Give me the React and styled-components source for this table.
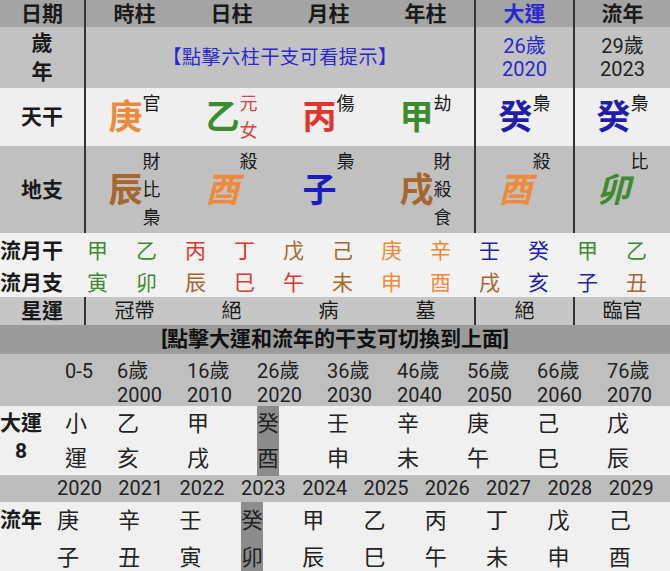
import React from 'react';
import styled, { createGlobalStyle } from 'styled-components';

const GlobalStyle = createGlobalStyle`
  html, body {
    margin: 0;
    padding: 0;
    background: #f0f0f0;
  }
  body {
    font-family: Roboto, "Noto Sans CJK TC", sans-serif;
    color: #222;
  }
`;

const WUXING = {
  wood: '#3d8b2f',
  fire: '#e0342d',
  earth: '#a6662c',
  metal: '#f08a3a',
  water: '#1e1ea8',
};

const BLUE = '#2828d2';
const LINE = '2px solid #333';

const Page = styled.div`
  width: 670px;
  overflow: hidden;
`;

// ---- top pillar table ----

const PillarRow = styled.div`
  display: grid;
  grid-template-columns: 86px repeat(4, 97px) 99px 97px;
  height: ${p => p.$h}px;
  background: ${p => p.$bg};
`;

const Label = styled.div`
  display: flex;
  flex-direction: column;
  align-items: center;
  justify-content: center;
  border-right: ${p => (p.$line === false ? 'none' : LINE)};
  font-size: 21px;
  font-weight: 700;
  line-height: ${p => p.$lh || 28}px;
  color: #1a1a1a;
`;

const Cell = styled.div`
  display: flex;
  flex-direction: column;
  align-items: center;
  justify-content: center;
  grid-column: span ${p => p.$span || 1};
  border-left: ${p => (p.$divider ? LINE : 'none')};
  color: ${p => p.$color || '#1a1a1a'};
  font-size: ${p => p.$size || 21}px;
  font-weight: ${p => (p.$bold ? 700 : 400)};
  line-height: ${p => p.$lh || 28}px;
  letter-spacing: ${p => p.$ls || 0}px;
`;

const Stem = styled.div`
  display: flex;
  align-items: center;
`;

const Big = styled.span`
  font-size: 34px;
  font-weight: 700;
  line-height: 40px;
  color: ${p => p.$color};
  font-style: ${p => (p.$italic ? 'italic' : 'normal')};
`;

const Side = styled.div`
  display: flex;
  flex-direction: column;
`;

const Slot = styled.span`
  height: ${p => p.$h}px;
  line-height: ${p => p.$h}px;
  font-size: 18px;
  color: ${p => p.$color || '#1a1a1a'};
`;

const GanZhi = ({ char, color, italic, side, sideColor, slots, slotH }) => (
  <Stem>
    <Big $color={color} $italic={italic}>{char}</Big>
    <Side>
      {Array.from({ length: slots }).map((_, i) => (
        <Slot key={i} $h={slotH} $color={sideColor}>{side[i] || ''}</Slot>
      ))}
    </Side>
  </Stem>
);

const stems = [
  { char: '庚', color: WUXING.metal, side: ['官'] },
  { char: '乙', color: WUXING.wood, side: ['元', '女'], sideColor: '#d8443e' },
  { char: '丙', color: WUXING.fire, side: ['傷'] },
  { char: '甲', color: WUXING.wood, side: ['劫'] },
  { char: '癸', color: WUXING.water, side: ['梟'] },
  { char: '癸', color: WUXING.water, side: ['梟'] },
];

const branches = [
  { char: '辰', color: WUXING.earth, side: ['財', '比', '梟'] },
  { char: '酉', color: WUXING.metal, side: ['殺'], italic: true },
  { char: '子', color: '#1c1cb8', side: ['梟'] },
  { char: '戌', color: WUXING.earth, side: ['財', '殺', '食'] },
  { char: '酉', color: WUXING.metal, side: ['殺'], italic: true },
  { char: '卯', color: WUXING.wood, side: ['比'], italic: true },
];

// ---- monthly rows ----

const MonthRow = styled.div`
  display: grid;
  grid-template-columns: 73px repeat(12, 49px);
  height: 32px;
  align-items: center;
  background: #f2f2f2;
`;

const MonthLabel = styled.div`
  font-size: 21px;
  font-weight: 700;
  color: #1a1a1a;
  white-space: nowrap;
`;

const MonthChar = styled.div`
  text-align: center;
  font-size: 21px;
  color: ${p => p.$color};
`;

const monthStems = [
  ['甲', 'wood'], ['乙', 'wood'], ['丙', 'fire'], ['丁', 'fire'], ['戊', 'earth'], ['己', 'earth'],
  ['庚', 'metal'], ['辛', 'metal'], ['壬', 'water'], ['癸', 'water'], ['甲', 'wood'], ['乙', 'wood'],
];

const monthBranches = [
  ['寅', 'wood'], ['卯', 'wood'], ['辰', 'earth'], ['巳', 'fire'], ['午', 'fire'], ['未', 'earth'],
  ['申', 'metal'], ['酉', 'metal'], ['戌', 'earth'], ['亥', 'water'], ['子', 'water'], ['丑', 'earth'],
];

// ---- banner ----

const Banner = styled.div`
  height: 29px;
  line-height: 29px;
  background: #9b9b9b;
  text-align: center;
  font-size: 21px;
  font-weight: 700;
  color: #111;
`;

// ---- decade & year tables ----

const ListRow = styled.div`
  display: grid;
  grid-template-columns: ${p => p.$cols};
  height: ${p => p.$h}px;
  padding-top: ${p => p.$pt || 0}px;
  box-sizing: border-box;
  background: ${p => p.$bg};
  font-size: 20px;
  color: #222;
`;

const HeadCell = styled.div`
  display: flex;
  flex-direction: column;
  align-items: flex-start;
  line-height: ${p => p.$lh}px;
  white-space: nowrap;
`;

const SideLabel = styled.div`
  display: inline-flex;
  flex-direction: column;
  align-items: center;
  align-self: start;
  justify-self: start;
  padding-top: ${p => p.$pt || 0}px;
  font-size: 21px;
  font-weight: 700;
  line-height: ${p => p.$lh}px;
  color: #1a1a1a;
`;

const Pair = styled.div`
  display: flex;
  flex-direction: column;
  align-items: center;
  justify-self: start;
  width: 22px;
  font-size: 22px;
  line-height: ${p => p.$lh}px;
  background: ${p => (p.$active ? '#8c8c8c' : 'transparent')};
`;

const DECADE_COLS = '65px 52px repeat(7, 70px) 63px';
const YEAR_COLS = '57px repeat(10, 61.3px)';

const decades = [
  { age: '0-5', year: '', gz: '小運' },
  { age: '6歲', year: '2000', gz: '乙亥' },
  { age: '16歲', year: '2010', gz: '甲戌' },
  { age: '26歲', year: '2020', gz: '癸酉', active: true },
  { age: '36歲', year: '2030', gz: '壬申' },
  { age: '46歲', year: '2040', gz: '辛未' },
  { age: '56歲', year: '2050', gz: '庚午' },
  { age: '66歲', year: '2060', gz: '己巳' },
  { age: '76歲', year: '2070', gz: '戊辰' },
];

const years = [
  ['2020', '庚子'], ['2021', '辛丑'], ['2022', '壬寅'], ['2023', '癸卯'], ['2024', '甲辰'],
  ['2025', '乙巳'], ['2026', '丙午'], ['2027', '丁未'], ['2028', '戊申'], ['2029', '己酉'],
];

const App = () => (
  <>
    <GlobalStyle />
    <Page>
      <PillarRow $h={27} $bg="#a4a4a4">
        <Label>日期</Label>
        <Cell $bold>時柱</Cell>
        <Cell $bold>日柱</Cell>
        <Cell $bold>月柱</Cell>
        <Cell $bold>年柱</Cell>
        <Cell $bold $divider $color={BLUE}>大運</Cell>
        <Cell $bold $divider>流年</Cell>
      </PillarRow>

      <PillarRow $h={61} $bg="#c2c2c2">
        <Label $lh={29}><span>歲</span><span>年</span></Label>
        <Cell $span={4} $size={19} $ls={0.6} $color={BLUE}>【點擊六柱干支可看提示】</Cell>
        <Cell $divider $size={20} $lh={23} $color={BLUE}><span>26歲</span><span>2020</span></Cell>
        <Cell $divider $size={20} $lh={23} $color="#222"><span>29歲</span><span>2023</span></Cell>
      </PillarRow>

      <PillarRow $h={58} $bg="#efefef">
        <Label>天干</Label>
        {stems.map((s, i) => (
          <Cell key={i} $divider={i >= 4}>
            <GanZhi {...s} slots={2} slotH={27} />
          </Cell>
        ))}
      </PillarRow>

      <PillarRow $h={87} $bg="#c0c0c0">
        <Label>地支</Label>
        {branches.map((b, i) => (
          <Cell key={i} $divider={i >= 4}>
            <GanZhi {...b} slots={3} slotH={28} />
          </Cell>
        ))}
      </PillarRow>

      <MonthRow>
        <MonthLabel>流月干</MonthLabel>
        {monthStems.map(([c, w], i) => (
          <MonthChar key={i} $color={WUXING[w]}>{c}</MonthChar>
        ))}
      </MonthRow>
      <MonthRow>
        <MonthLabel>流月支</MonthLabel>
        {monthBranches.map(([c, w], i) => (
          <MonthChar key={i} $color={WUXING[w]}>{c}</MonthChar>
        ))}
      </MonthRow>

      <PillarRow $h={28} $bg="#c6c6c6">
        <Label>星運</Label>
        <Cell $size={20}>冠帶</Cell>
        <Cell $size={20}>絕</Cell>
        <Cell $size={20}>病</Cell>
        <Cell $size={20}>墓</Cell>
        <Cell $divider $size={20}>絕</Cell>
        <Cell $divider $size={20}>臨官</Cell>
      </PillarRow>

      <Banner>[點擊大運和流年的干支可切換到上面]</Banner>

      <ListRow $cols={DECADE_COLS} $h={52} $pt={5} $bg="#bfbfbf">
        <div />
        {decades.map((d, i) => (
          <HeadCell key={i} $lh={24}>
            <span>{d.age}</span>
            {d.year && <span>{d.year}</span>}
          </HeadCell>
        ))}
      </ListRow>
      <ListRow $cols={DECADE_COLS} $h={69} $bg="#f0f0f0">
        <SideLabel $pt={3} $lh={28}><span>大運</span><span>8</span></SideLabel>
        {decades.map((d, i) => (
          <Pair key={i} $lh={35} $active={d.active}>
            <span>{d.gz[0]}</span>
            <span>{d.gz[1]}</span>
          </Pair>
        ))}
      </ListRow>

      <ListRow $cols={YEAR_COLS} $h={27} $bg="#bdbdbd">
        <div />
        {years.map(([y]) => (
          <HeadCell key={y} $lh={27}>{y}</HeadCell>
        ))}
      </ListRow>
      <ListRow $cols={YEAR_COLS} $h={76} $bg="#f0f0f0">
        <SideLabel $pt={4} $lh={28}>流年</SideLabel>
        {years.map(([y, gz]) => (
          <Pair key={y} $lh={37} $active={y === '2023'}>
            <span>{gz[0]}</span>
            <span>{gz[1]}</span>
          </Pair>
        ))}
      </ListRow>
    </Page>
  </>
);

export default App;
